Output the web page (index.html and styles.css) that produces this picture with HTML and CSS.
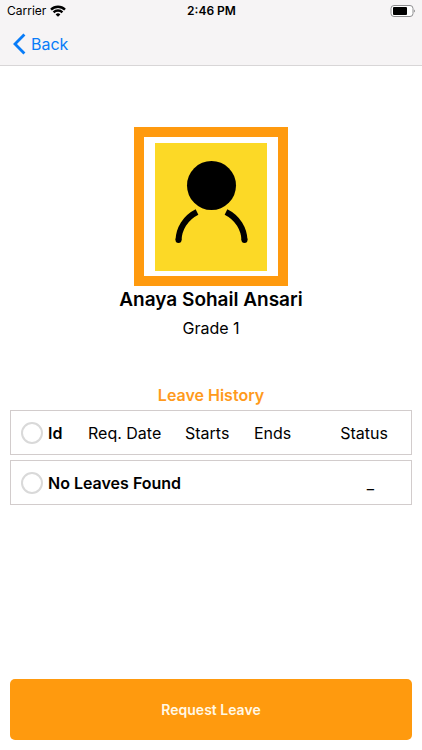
FILE: index.html
```html
<!DOCTYPE html>
<html lang="en">
<head>
  <meta charset="utf-8">
  <meta name="viewport" content="width=device-width, initial-scale=1">
  <title>Leave History</title>
  <link rel="stylesheet" href="styles.css">
</head>
<body>
  <header class="top">
    <div class="status-bar">
      <div class="carrier">
        <span>Carrier</span>
        <svg class="wifi" viewBox="0 0 16 12" aria-hidden="true">
          <g fill="none" stroke="#000" stroke-width="2.4">
            <path d="M1 4.6A10 10 0 0 1 15 4.6"/>
            <path d="M3.6 7.4A6.2 6.2 0 0 1 12.4 7.4"/>
          </g>
          <path d="M8 11.8L5.6 9.4A3.4 3.4 0 0 1 10.4 9.4Z"/>
        </svg>
      </div>
      <time class="clock">2:46 PM</time>
      <svg class="battery" viewBox="0 0 26 12" aria-hidden="true">
        <rect x="1" y="0.5" width="22" height="11" rx="3" fill="#fff" stroke="#8e8e90"/>
        <rect x="3" y="2" width="14" height="8" rx="1"/>
        <path d="M24 4.500Q26 6 24 7.500Z" fill="#8e8e90"/>
      </svg>
    </div>
    <nav class="nav">
      <a class="back" href="#">
        <svg class="chevron" viewBox="0 0 13 22" aria-hidden="true">
          <path d="M11.4 1.4L2 11L11.4 20.6" fill="none" stroke="#087cf8" stroke-width="2.8"/>
        </svg>
        <span>Back</span>
      </a>
    </nav>
  </header>

  <main class="content">
    <section class="profile">
      <div class="avatar">
        <svg class="portrait" viewBox="0 0 112 128" role="img" aria-label="Student photo">
          <rect width="112" height="128" fill="#fcd926"/>
          <circle cx="56.5" cy="42.500" r="24.500"/>
          <g fill="none" stroke="#000" stroke-width="6">
            <path d="M42 69C30 75 24 86 23.500 97"/>
            <path d="M71 69C83 75 89 86 89.500 97"/>
          </g>
          <circle cx="23.500" cy="97" r="3"/>
          <circle cx="89.500" cy="97" r="3"/>
        </svg>
      </div>
      <h1 class="name">Anaya Sohail Ansari</h1>
      <p class="grade">Grade 1</p>
    </section>

    <section class="history">
      <h2 class="title">Leave History</h2>
      <table class="leaves">
        <colgroup>
          <col class="col-pick"><col class="col-id"><col class="col-date"><col class="col-starts"><col><col class="col-status">
        </colgroup>
        <thead>
          <tr>
            <td class="pick"><input class="radio" type="radio" name="leave" aria-label="Select header"></td>
            <th class="strong" scope="col">Id</th>
            <th scope="col">Req. Date</th>
            <th scope="col">Starts</th>
            <th scope="col">Ends</th>
            <th class="state" scope="col">Status</th>
          </tr>
        </thead>
        <tbody>
          <tr>
            <td class="pick"><input class="radio" type="radio" name="leave" id="none"></td>
            <td class="strong" colspan="4"><label for="none">No Leaves Found</label></td>
            <td class="empty">_</td>
          </tr>
        </tbody>
      </table>
    </section>

    <button class="request" type="button">Request Leave</button>
  </main>
</body>
</html>
```
FILE: styles.css
```css
* {
  box-sizing: border-box;
}

body {
  margin: 0;
  min-height: 100vh;
  display: flex;
  flex-direction: column;
  background: #fff;
  color: #000;
  font: 16px/20px Inter, "Liberation Sans", sans-serif;
}

h1,
h2,
p {
  margin: 0;
}

.top {
  background: #f6f4f5;
  border-bottom: 1px solid #d8d6d7;
}

.status-bar {
  display: grid;
  grid-template-columns: 1fr auto 1fr;
  align-items: center;
  height: 22px;
  padding: 0 6px 0 7px;
  font-size: 12px;
}

.carrier {
  display: flex;
  align-items: center;
  gap: 4px;
}

.wifi {
  width: 16px;
  height: 12px;
}

.clock {
  font-weight: 600;
}

.battery {
  justify-self: end;
  width: 26px;
  height: 12px;
}

.nav {
  display: flex;
  align-items: center;
  height: 43px;
  padding: 0 13px;
}

.back {
  display: flex;
  align-items: center;
  gap: 5px;
  color: #087cf8;
  font-size: 16px;
  text-decoration: none;
}

.chevron {
  width: 13px;
  height: 22px;
}

.content {
  flex: 1;
  display: flex;
  flex-direction: column;
  padding: 61px 10px 10px;
}

.profile {
  display: flex;
  flex-direction: column;
  align-items: center;
  text-align: center;
}

.avatar {
  padding: 6px 11px 5px;
  border: 10px solid #ff9a0e;
}

.portrait {
  display: block;
  width: 112px;
  height: 128px;
}

.name {
  font-size: 19px;
  font-weight: 600;
  line-height: 28px;
}

.grade {
  line-height: 28px;
}

.history {
  margin-top: 43px;
}

.title {
  color: #ff9a1c;
  font-size: 16px;
  font-weight: 600;
  text-align: center;
}

.leaves {
  width: 100%;
  table-layout: fixed;
  border-collapse: separate;
  border-spacing: 0 5px;
}

.col-pick {
  width: 38px;
}

.col-id {
  width: 40px;
}

.col-date {
  width: 97px;
}

.col-starts {
  width: 69px;
}

.col-status {
  width: 82px;
}

.leaves th,
.leaves td {
  height: 45px;
  padding: 0;
  border: solid #d2cccc;
  border-width: 1px 0;
  font-size: 16px;
  font-weight: 400;
  text-align: left;
  white-space: nowrap;
}

.leaves .pick {
  padding-left: 10px;
  border-left-width: 1px;
}

.leaves .strong {
  font-weight: 600;
}

.leaves .state,
.leaves .empty {
  border-right-width: 1px;
  text-align: center;
}

.leaves .state {
  padding-right: 13px;
}

.radio {
  display: block;
  appearance: none;
  width: 22px;
  height: 22px;
  margin: 0;
  border: 2px solid #d9d9d9;
  border-radius: 50%;
  background: #fff;
}

.request {
  height: 61px;
  margin-top: auto;
  border: 0;
  border-radius: 5px;
  background: #ff9a0e;
  color: #fff8e6;
  font: 600 14px/20px Inter, "Liberation Sans", sans-serif;
}
```
